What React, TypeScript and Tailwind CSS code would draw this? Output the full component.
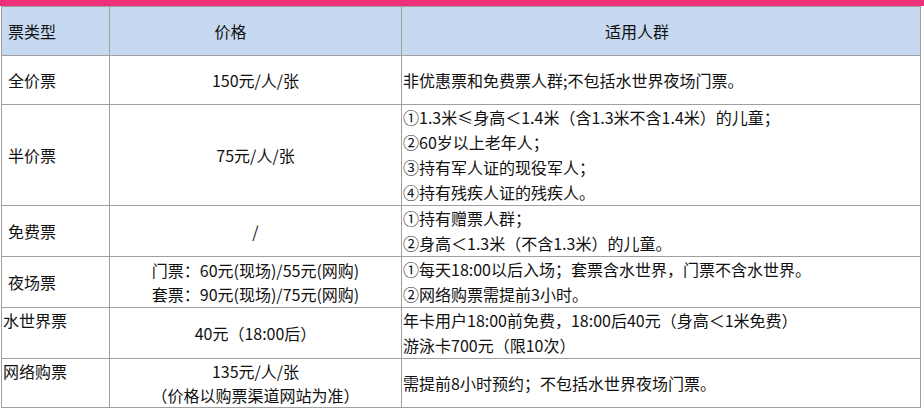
const rows = [
  {
    type: '全价票',
    typeTop: false,
    price: ['150元/人/张'],
    who: ['非优惠票和免费票人群;不包括水世界夜场门票。'],
    h: 'h-[49px]',
  },
  {
    type: '半价票',
    typeTop: false,
    price: ['75元/人/张'],
    who: [
      '①1.3米≤身高＜1.4米（含1.3米不含1.4米）的儿童；',
      '②60岁以上老年人；',
      '③持有军人证的现役军人；',
      '④持有残疾人证的残疾人。',
    ],
    h: 'h-[100px]',
  },
  {
    type: '免费票',
    typeTop: false,
    price: ['/'],
    who: ['①持有赠票人群；', '②身高＜1.3米（不含1.3米）的儿童。'],
    h: 'h-[50px]',
  },
  {
    type: '夜场票',
    typeTop: false,
    price: ['门票：60元(现场)/55元(网购)', '套票：90元(现场)/75元(网购)'],
    who: ['①每天18:00以后入场；套票含水世界，门票不含水世界。', '②网络购票需提前3小时。'],
    h: 'h-[49px]',
  },
  {
    type: '水世界票',
    typeTop: true,
    price: ['40元（18:00后）'],
    who: ['年卡用户18:00前免费，18:00后40元（身高＜1米免费）', '游泳卡700元（限10次）'],
    h: 'h-[49px]',
  },
  {
    type: '网络购票',
    typeTop: true,
    price: ['135元/人/张', '（价格以购票渠道网站为准）'],
    who: ['需提前8小时预约；不包括水世界夜场门票。'],
    h: 'h-[49px]',
  },
];

export default function App() {
  return (
    <div className="w-[924px] h-[419px] bg-white text-[16px] text-[#111] font-['Microsoft_YaHei','Noto_Sans_CJK_SC',sans-serif]">
      <div className="h-[6px] bg-[#ec3178]" />
      <div className="pl-[1px]">
        <table className="w-[920px] border-collapse table-fixed">
          <colgroup>
            <col className="w-[108px]" />
            <col className="w-[292px]" />
            <col className="w-[519px]" />
          </colgroup>
          <thead>
            <tr className="h-[49px] bg-[#c6d9f1]">
              <th className="border border-[#a0a0a0] pl-[6px] text-left font-normal align-middle">票类型</th>
              <th className="border border-[#a0a0a0] pr-[50px] text-center font-normal align-middle">价格</th>
              <th className="border border-[#a0a0a0] pr-[48px] text-center font-normal align-middle">适用人群</th>
            </tr>
          </thead>
          <tbody>
            {rows.map((r) => (
              <tr key={r.type} className={r.h}>
                <td
                  className={
                    r.typeTop
                      ? 'border border-[#a0a0a0] pl-[1px] align-top leading-[25px]'
                      : 'border border-[#a0a0a0] pl-[6px] align-middle leading-[25px]'
                  }
                >
                  {r.type}
                </td>
                <td className="border border-[#a0a0a0] text-center align-middle leading-[24px]">
                  {r.price.map((p) => (
                    <div key={p}>{p}</div>
                  ))}
                </td>
                <td className="border border-[#a0a0a0] pl-[1px] align-middle leading-[25px]">
                  {r.who.map((w) => (
                    <div key={w} className="whitespace-nowrap">{w}</div>
                  ))}
                </td>
              </tr>
            ))}
          </tbody>
        </table>
      </div>
    </div>
  );
}
